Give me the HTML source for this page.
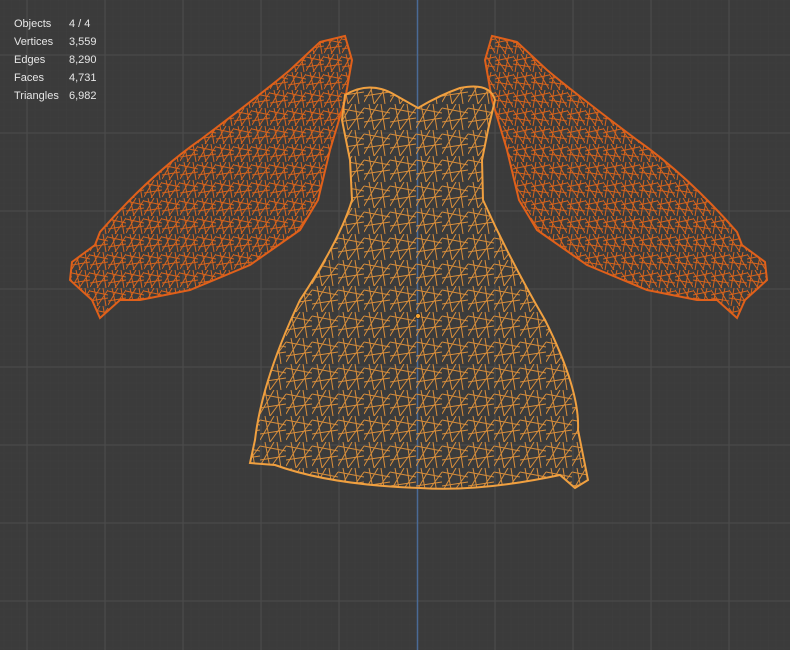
<!DOCTYPE html>
<html><head><style>
html,body{margin:0;padding:0;background:#3b3b3b;width:790px;height:650px;overflow:hidden;font-family:"Liberation Sans","DejaVu Sans",sans-serif}
.stats{position:absolute;left:14px;top:15px;color:#e6e6e6;font-size:11px;line-height:18px}
.stats div{display:flex}.stats span:first-child{width:55px}
</style></head><body>
<svg width="790" height="650" style="position:absolute;left:0;top:0">
<defs>
<pattern id="minor" width="7.8" height="7.8" patternUnits="userSpaceOnUse" x="27" y="55">
<path d="M0 0H7.8M0 0V7.8" stroke="#3e3e3e" stroke-width="1" fill="none"/></pattern>
<pattern id="wd" width="18" height="18" patternUnits="userSpaceOnUse">
<path d="M0 3L18 7M4 0L8 18M0 13L18 10M13 0L16 18M0 17L10 0M7 18L18 2" stroke="#d8641c" stroke-width="1" fill="none"/></pattern>
<pattern id="wl" width="26" height="26" patternUnits="userSpaceOnUse">
<path d="M0 4L26 9M5 0L10 26M0 18L26 14M17 0L21 26M0 24L14 0M10 26L26 4" stroke="#d98e3a" stroke-width="1" fill="none"/></pattern>
</defs>
<rect width="790" height="650" fill="#3b3b3b"/>
<rect width="790" height="650" fill="url(#minor)"/>
<g stroke="#4a4a4a" stroke-width="1.3">
<path d="M27 0V650M105 0V650M183 0V650M261 0V650M339 0V650M495 0V650M573 0V650M651 0V650M729 0V650"/>
<path d="M0 55H790M0 133H790M0 211H790M0 289H790M0 367H790M0 445H790M0 523H790M0 601H790"/>
</g>
<path d="M417.5 0V650" stroke="#4a6a95" stroke-width="1.5"/>
<g id="sl">
<path d="M320 42L345 36L352 60L345 100L330 150L318 200L300 230L250 265L190 290L140 300L120 300L100 318L92 300L70 280L72 262L95 245L100 232Q150 175 200 140Q260 95 290 70Z" fill="url(#wd)" stroke="#e0601a" stroke-width="2"/>
</g>
<use href="#sl" transform="translate(837 0) scale(-1 1)"/>
<path d="M345 95Q370 80 395 95L418 108Q440 95 460 88Q490 82 495 100L488 130L482 160L483 200Q510 260 545 320Q580 390 578 430L588 480L575 488L560 475Q480 492 420 488Q330 485 275 465L250 463L255 440Q262 380 300 300Q340 240 352 200L350 160L342 120Z" fill="url(#wl)" stroke="#f0a040" stroke-width="2"/>
<circle cx="418" cy="316" r="2.5" fill="#f0a030" stroke="#222" stroke-width="0.7"/>
</svg>
<div class="stats">
<div><span>Objects</span><span>4 / 4</span></div>
<div><span>Vertices</span><span>3,559</span></div>
<div><span>Edges</span><span>8,290</span></div>
<div><span>Faces</span><span>4,731</span></div>
<div><span>Triangles</span><span>6,982</span></div>
</div>
</body></html>
